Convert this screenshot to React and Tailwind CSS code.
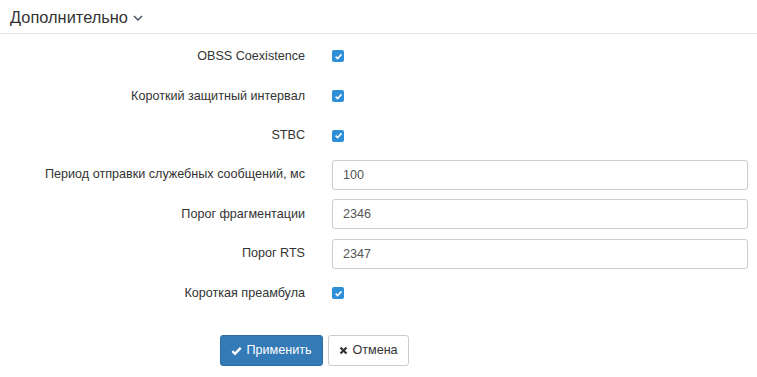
import React from "react";

const Check = () => (
  <span className="flex h-[12px] w-[12px] items-center justify-center rounded-[2px] bg-[#2d8fd8]">
    <svg width="9" height="9" viewBox="0 0 10 10">
      <polyline points="1.8,5.2 4,7.3 8.3,2.6" fill="none" stroke="#fff" strokeWidth="1.8" />
    </svg>
  </span>
);

const rows = [
  { label: "OBSS Coexistence", type: "check", h: "h-[40px]" },
  { label: "Короткий защитный интервал", type: "check", h: "h-[40px]" },
  { label: "STBC", type: "check", h: "h-[39px]" },
  { label: "Период отправки служебных сообщений, мс", type: "input", value: "100", h: "h-[39px]" },
  { label: "Порог фрагментации", type: "input", value: "2346", h: "h-[40px]" },
  { label: "Порог RTS", type: "input", value: "2347", h: "h-[39px]" },
  { label: "Короткая преамбула", type: "check", h: "h-[40px]" },
];

export default function App() {
  return (
    <div className="h-[377px] w-[757px] bg-white font-['Liberation_Sans',Arial,sans-serif] text-[12.6px] text-[#333]">
      {/* header */}
      <div className="flex h-[34px] items-center border-b border-[#e5e5e5] pl-[10px] pt-[1px]">
        <span className="text-[16.4px] text-[#333]">Дополнительно</span>
        <svg className="ml-[5px] mt-[2px]" width="10" height="6" viewBox="0 0 10 6">
          <polyline points="1,1 5,5 9,1" fill="none" stroke="#3a4a5c" strokeWidth="1.3" />
        </svg>
      </div>

      <div className="pt-[2px]">
        {rows.map((r) => (
          <div key={r.label} className={`flex items-center ${r.h}`}>
            <div className="w-[305px] text-right">{r.label}</div>
            <div className="ml-[27px]">
              {r.type === "check" ? (
                <Check />
              ) : (
                <input
                  readOnly
                  value={r.value}
                  className="h-[30px] w-[416px] rounded-[3px] border border-[#ccc] px-[10px] text-[12.6px] text-[#555] outline-none"
                />
              )}
            </div>
          </div>
        ))}
      </div>

      <div className="mt-[22px] flex gap-[5px] pl-[220px]">
        <button className="flex h-[31px] w-[103px] items-center justify-center gap-[4px] rounded-[3px] border border-[#2e6da4] bg-[#337ab7] text-[12.6px] text-white">
          <svg width="11" height="10" viewBox="0 0 11 10">
            <polyline points="1.3,5.2 4,7.8 9.7,1.8" fill="none" stroke="#fff" strokeWidth="2.4" />
          </svg>
          Применить
        </button>
        <button className="flex h-[31px] w-[81px] items-center justify-center gap-[4px] rounded-[3px] border border-[#ccc] bg-white text-[12.6px] text-[#333]">
          <svg width="9" height="9" viewBox="0 0 9 9">
            <path d="M1.5 1.5 L7.5 7.5 M7.5 1.5 L1.5 7.5" stroke="#333" strokeWidth="2.2" />
          </svg>
          Отмена
        </button>
      </div>
    </div>
  );
}
